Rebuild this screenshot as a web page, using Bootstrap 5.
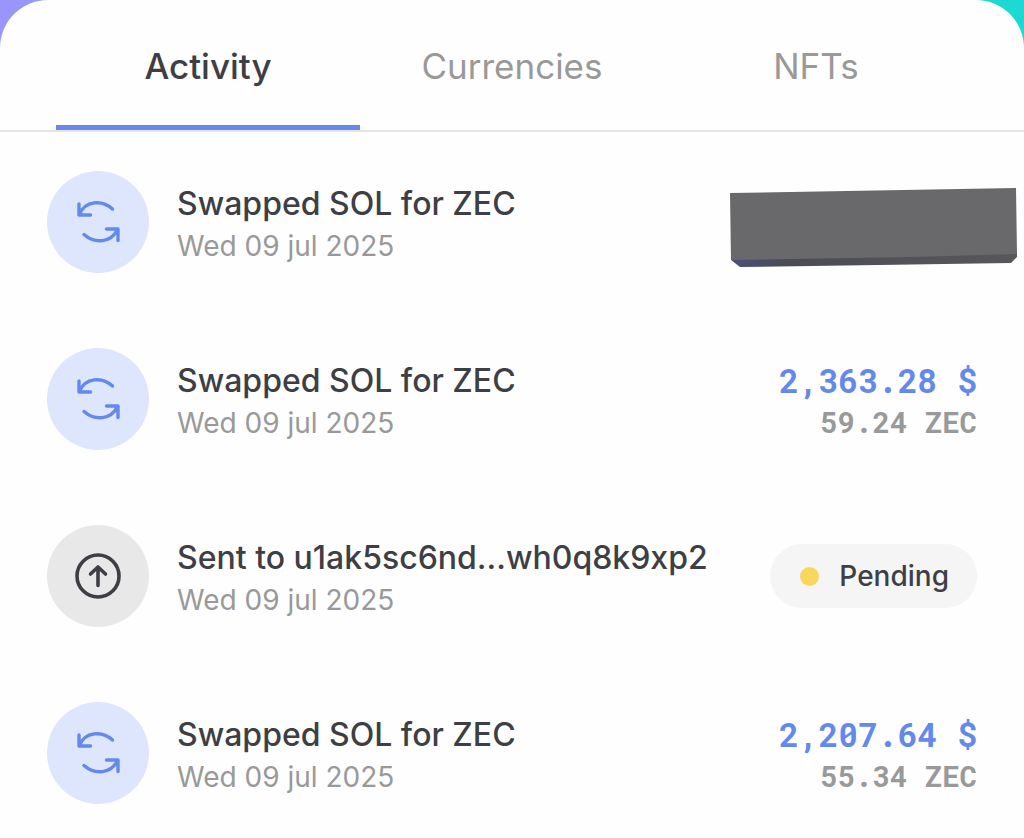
<!DOCTYPE html>
<html lang="en">
<head>
<meta charset="utf-8">
<meta name="viewport" content="width=device-width, initial-scale=1">
<title>Wallet activity</title>
<link href="https://cdn.jsdelivr.net/npm/bootstrap@5.3.0/dist/css/bootstrap.min.css" rel="stylesheet">
<style>
  body { font-family: Inter, "Liberation Sans", sans-serif; color: #3d3f45; background: linear-gradient(90deg, #9a95fb, #1bdad2); }
  .sheet { background: #fefefe; border-radius: 48px 48px 0 0; }
  .tabs { padding: 0 56px; border-bottom: 2px solid #e4e4e4; }
  .tabs .nav-link { height: 130px; padding: 6px 0 0; border-bottom: 5px solid transparent; border-radius: 0; font-size: 35px; line-height: 48px; color: #999; }
  .tabs .nav-link.active { color: #3d3f45; font-weight: 500; border-bottom-color: #6488f0; }
  .feed { padding: 39px 47px 32px; gap: 75px; }
  .entry { gap: 28px; }
  .disc { width: 102px; height: 102px; background: #dee6fd; color: #6389ec; }
  .disc-sent { background: #e8e8e8; color: #3d3f45; }
  .about { padding-top: 6px; }
  .title { font-size: 32px; line-height: 42px; font-weight: 500; }
  .date { font-size: 28px; line-height: 42px; color: #999; }
  .amount { font-family: "Roboto Mono", "Liberation Mono", monospace; font-weight: 700; padding-top: 4px; }
  .fiat { font-size: 33px; line-height: 42px; color: #6389ec; }
  .coin { font-size: 29px; line-height: 42px; color: #999; }
  .status { gap: 20px; padding: 12px 28px 12px 30px; font-size: 28px; line-height: 40px; font-weight: 500; background: #f5f5f5; }
  .dot { width: 19px; height: 19px; background: #f9d65c; }
  .cover { margin: 10px -41px 0 0; }
</style>
</head>
<body>
<svg class="d-none" aria-hidden="true">
  <symbol id="swap" viewBox="0 0 102 102">
    <g fill="none" stroke="currentColor" stroke-width="3.400" stroke-linecap="round" stroke-linejoin="round">
      <path d="M65.500 38C55 28.500 38 29.500 32.500 43.500M32 33V44H43.500"/>
      <path d="M37 63.500C48 73 64 72 70.500 58.500M59.500 58H71V69.500"/>
    </g>
  </symbol>
  <symbol id="sent" viewBox="0 0 102 102">
    <g fill="none" stroke="currentColor" stroke-width="3.600" stroke-linecap="round" stroke-linejoin="round">
      <circle cx="51" cy="51" r="21"/>
      <path d="M51 60.500V42.500M43.500 49L51 42L58.500 49"/>
    </g>
  </symbol>
</svg>
<main class="sheet min-vh-100">
  <nav class="tabs nav nav-justified flex-nowrap" aria-label="Wallet">
    <a class="nav-link active d-flex align-items-center justify-content-center" aria-current="page" href="#activity">Activity</a>
    <a class="nav-link d-flex align-items-center justify-content-center" href="#currencies">Currencies</a>
    <a class="nav-link d-flex align-items-center justify-content-center" href="#nfts">NFTs</a>
  </nav>
  <ul id="activity" class="feed list-unstyled d-flex flex-column mb-0">
    <li class="entry d-flex align-items-center">
      <svg class="disc rounded-circle flex-shrink-0" aria-hidden="true"><use href="#swap"/></svg>
      <div class="about flex-grow-1 text-nowrap">
        <div class="title">Swapped SOL for ZEC</div>
        <div class="date">Wed 09 jul 2025</div>
      </div>
      <svg class="cover flex-shrink-0" width="288" height="79" viewBox="0 0 288 79" role="img" aria-label="Hidden amount">
        <defs>
          <linearGradient id="edge"><stop offset="0" stop-color="#47517c"/><stop offset=".2" stop-color="#4b4c54"/><stop offset="1" stop-color="#58585b"/></linearGradient>
        </defs>
        <path fill="url(#edge)" d="M1 68L287 63V69L281 75L10 79L1 72Z"/>
        <path fill="#69696b" d="M0 5L286 0L287 66L182 69L1 72Z"/>
      </svg>
    </li>
    <li class="entry d-flex align-items-center">
      <svg class="disc rounded-circle flex-shrink-0" aria-hidden="true"><use href="#swap"/></svg>
      <div class="about flex-grow-1 text-nowrap">
        <div class="title">Swapped SOL for ZEC</div>
        <div class="date">Wed 09 jul 2025</div>
      </div>
      <div class="amount text-end text-nowrap">
        <div class="fiat">2,363.28 $</div>
        <div class="coin">59.24 ZEC</div>
      </div>
    </li>
    <li class="entry d-flex align-items-center">
      <svg class="disc disc-sent rounded-circle flex-shrink-0" aria-hidden="true"><use href="#sent"/></svg>
      <div class="about flex-grow-1 text-nowrap">
        <div class="title">Sent to u1ak5sc6nd...wh0q8k9xp2</div>
        <div class="date">Wed 09 jul 2025</div>
      </div>
      <div class="status d-flex align-items-center rounded-pill">
        <span class="dot rounded-circle"></span>Pending
      </div>
    </li>
    <li class="entry d-flex align-items-center">
      <svg class="disc rounded-circle flex-shrink-0" aria-hidden="true"><use href="#swap"/></svg>
      <div class="about flex-grow-1 text-nowrap">
        <div class="title">Swapped SOL for ZEC</div>
        <div class="date">Wed 09 jul 2025</div>
      </div>
      <div class="amount text-end text-nowrap">
        <div class="fiat">2,207.64 $</div>
        <div class="coin">55.34 ZEC</div>
      </div>
    </li>
  </ul>
</main>
<script src="https://cdn.jsdelivr.net/npm/bootstrap@5.3.0/dist/js/bootstrap.bundle.min.js"></script>
</body>
</html>
